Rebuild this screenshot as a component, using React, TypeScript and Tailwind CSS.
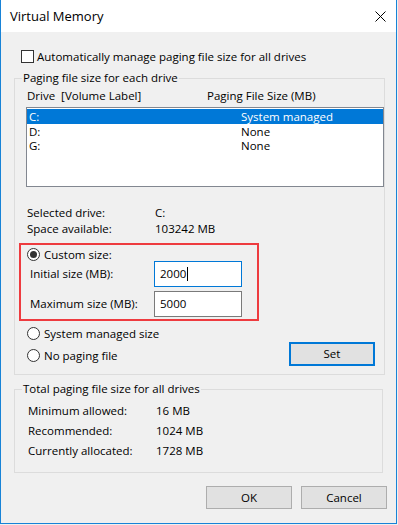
import React from "react";

type Row = { label: string; value: string };

const drives: Row[] = [
  { label: "C:", value: "System managed" },
  { label: "D:", value: "None" },
  { label: "G:", value: "None" },
];

const totals: Row[] = [
  { label: "Minimum allowed:", value: "16 MB" },
  { label: "Recommended:", value: "1024 MB" },
  { label: "Currently allocated:", value: "1728 MB" },
];

const Radio = ({ checked = false }: { checked?: boolean }) => (
  <span className="flex h-[13px] w-[13px] shrink-0 items-center justify-center rounded-full border border-[#333] bg-white">
    {checked && <span className="h-[7px] w-[7px] rounded-full bg-[#333]" />}
  </span>
);

const App = () => {
  return (
    <div className="h-[525px] w-[398px] bg-[#f0f0f0] text-[11.5px] leading-[16px] text-black [font-family:'Open_Sans',sans-serif]">
      <div className="flex h-[524px] w-[397px] flex-col border-x border-b border-[#1883d7] bg-[#f0f0f0]">
        {/* Title bar */}
        <div className="flex h-[32px] items-center justify-between bg-white pl-[9px] pr-[10px] text-[13px]">
          <span>Virtual Memory</span>
          <svg width="11" height="11" viewBox="0 0 11 11" className="mt-[1px]">
            <path d="M0.5 0.5 L10.5 10.5 M10.5 0.5 L0.5 10.5" stroke="#000" strokeWidth="1" />
          </svg>
        </div>

        {/* Auto manage */}
        <div className="mt-[18px] flex h-[13px] items-center gap-[3px] pl-[20px]">
          <span className="h-[13px] w-[13px] border border-[#333] bg-white" />
          <span>Automatically manage paging file size for all drives</span>
        </div>

        {/* Paging file size for each drive */}
        <fieldset className="ml-[13px] mt-[7px] w-[369px] border border-[#dcdcdc] pb-[8px] pt-[2px]">
          <legend className="ml-[7px] px-[1px]">Paging file size for each drive</legend>
          <div className="grid grid-cols-[180px_1fr] pl-[12px]">
            <span>Drive&nbsp; [Volume Label]</span>
            <span>Paging File Size (MB)</span>
          </div>
          <div className="ml-[11px] mt-[3px] h-[80px] w-[358px] border border-[#828790] bg-white pt-[1px]">
            {drives.map((d, i) => (
              <div
                key={d.label}
                className={
                  i === 0
                    ? "grid h-[15px] grid-cols-[212px_1fr] items-center bg-[#0078d7] pl-[2px] text-white"
                    : "grid h-[14px] grid-cols-[212px_1fr] items-center pl-[2px]"
                }
              >
                <span>{d.label}</span>
                <span>{d.value}</span>
              </div>
            ))}
          </div>

          <div className="mt-[18px] pl-[12px]">
            <div className="grid grid-cols-[128px_1fr]">
              <span>Selected drive:</span>
              <span>C:</span>
            </div>
            <div className="grid grid-cols-[128px_1fr]">
              <span>Space available:</span>
              <span>103242 MB</span>
            </div>
          </div>

          {/* Highlighted custom size block */}
          <div className="ml-[4px] mt-[6px] h-[78px] w-[240px] border-2 border-[#ee3b3f]">
            <div className="mt-[3px] flex h-[13px] items-center gap-[4px] pl-[6px]">
              <Radio checked />
              <span>Custom size:</span>
            </div>
            <div className="flex items-center pl-[9px]">
              <span className="w-[124px]">Initial size (MB):</span>
              <div className="flex h-[26px] w-[88px] items-center border border-[#0078d7] bg-white pl-[5px]">
                <span>2000</span>
                <span className="ml-[1px] h-[14px] w-[1px] bg-black" />
              </div>
            </div>
            <div className="mt-[4px] flex items-center pl-[9px]">
              <span className="w-[124px]">Maximum size (MB):</span>
              <div className="flex h-[26px] w-[88px] items-center border border-[#7a7a7a] bg-white pl-[5px]">
                <span>5000</span>
              </div>
            </div>
          </div>

          <div className="ml-[12px] mt-[6px] flex h-[13px] items-center gap-[4px]">
            <Radio />
            <span>System managed size</span>
          </div>
          <div className="mt-[2px] flex items-start justify-between pl-[12px] pr-[9px]">
            <div className="mt-[7px] flex h-[13px] items-center gap-[4px]">
              <Radio />
              <span>No paging file</span>
            </div>
            <button className="h-[24px] w-[86px] border-2 border-[#0078d7] bg-[#e1e1e1]">Set</button>
          </div>
        </fieldset>

        {/* Totals */}
        <fieldset className="ml-[13px] mt-[6px] w-[369px] border border-[#dcdcdc] pb-[11px] pt-[4px]">
          <legend className="ml-[7px] px-[1px]">Total paging file size for all drives</legend>
          {totals.map((t) => (
            <div key={t.label} className="grid h-[20px] grid-cols-[128px_1fr] items-center pl-[13px]">
              <span>{t.label}</span>
              <span>{t.value}</span>
            </div>
          ))}
        </fieldset>

        {/* Dialog buttons */}
        <div className="mt-[13px] flex justify-end gap-[9px] pr-[9px]">
          <button className="h-[23px] w-[86px] border border-[#adadad] bg-[#e1e1e1]">OK</button>
          <button className="h-[23px] w-[86px] border border-[#adadad] bg-[#e1e1e1]">Cancel</button>
        </div>
      </div>
    </div>
  );
};

export default App;
